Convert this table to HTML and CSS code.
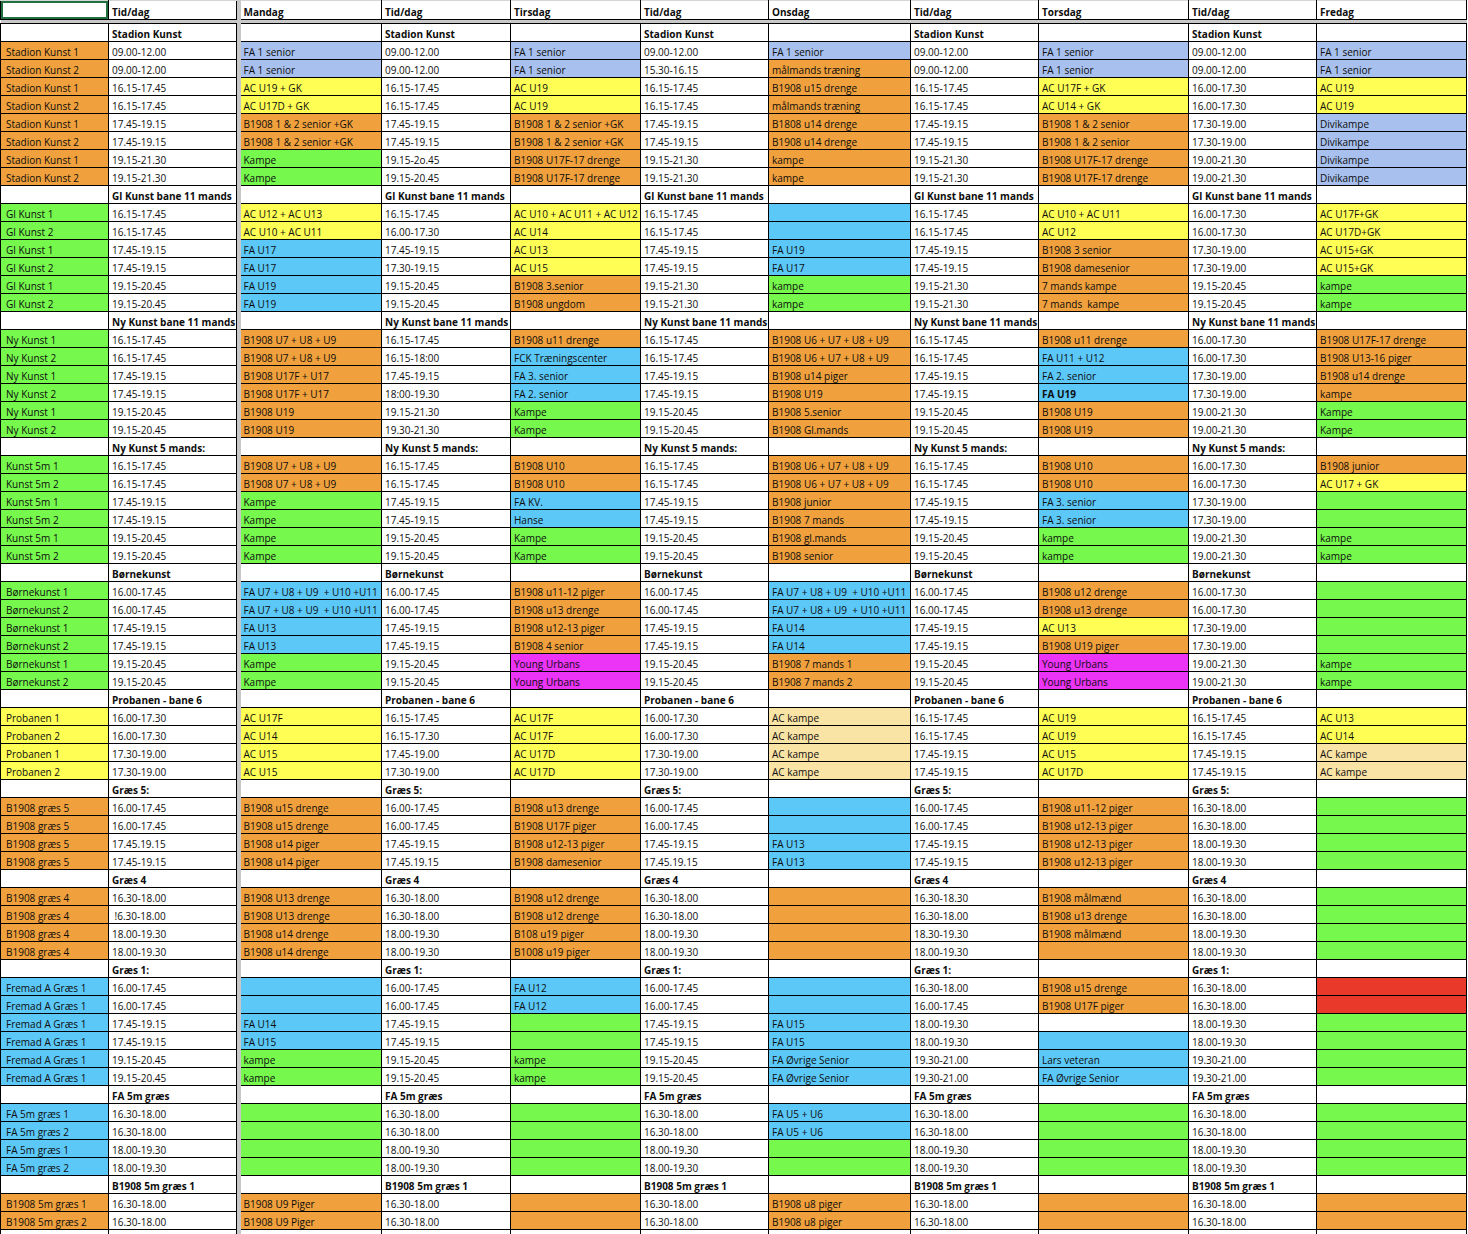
FILE: index.html
```html
<!DOCTYPE html>
<html lang="da">
<head>
<meta charset="utf-8">
<title>Baneplan</title>
<link rel="stylesheet" href="styles.css">
</head>
<body>
<table class="sheet">
<colgroup>
<col class="ca"><col class="cb"><col class="cc"><col class="cd"><col class="ce"><col class="cf"><col class="cg"><col class="ch"><col class="ci"><col class="cj"><col class="ck">
</colgroup>
<tbody>
<tr class="hd"><td class="sel"></td><td>Tid/dag</td><td>Mandag</td><td>Tid/dag</td><td>Tirsdag</td><td>Tid/dag</td><td>Onsdag</td><td>Tid/dag</td><td>Torsdag</td><td>Tid/dag</td><td>Fredag</td></tr>
<tr class="gap"><td colspan="11"></td></tr>

<tr class="s"><td></td><td>Stadion Kunst</td><td></td><td>Stadion Kunst</td><td></td><td>Stadion Kunst</td><td></td><td>Stadion Kunst</td><td></td><td>Stadion Kunst</td><td></td></tr>
<tr><td class="o">Stadion Kunst 1</td><td>09.00-12.00</td><td class="l">FA 1 senior</td><td>09.00-12.00</td><td class="l">FA 1 senior</td><td>09.00-12.00</td><td class="l">FA 1 senior</td><td>09.00-12.00</td><td class="l">FA 1 senior</td><td>09.00-12.00</td><td class="l">FA 1 senior</td></tr>
<tr><td class="o">Stadion Kunst 2</td><td>09.00-12.00</td><td class="l">FA 1 senior</td><td>09.00-12.00</td><td class="l">FA 1 senior</td><td>15.30-16.15</td><td class="o">målmands træning</td><td>09.00-12.00</td><td class="l">FA 1 senior</td><td>09.00-12.00</td><td class="l">FA 1 senior</td></tr>
<tr><td class="o">Stadion Kunst 1</td><td>16.15-17.45</td><td class="y">AC U19 + GK</td><td>16.15-17.45</td><td class="y">AC U19</td><td>16.15-17.45</td><td class="o">B1908 u15 drenge</td><td>16.15-17.45</td><td class="y">AC U17F + GK</td><td>16.00-17.30</td><td class="y">AC U19</td></tr>
<tr><td class="o">Stadion Kunst 2</td><td>16.15-17.45</td><td class="y">AC U17D + GK</td><td>16.15-17.45</td><td class="y">AC U19</td><td>16.15-17.45</td><td class="o">målmands træning</td><td>16.15-17.45</td><td class="y">AC U14 + GK</td><td>16.00-17.30</td><td class="y">AC U19</td></tr>
<tr><td class="o">Stadion Kunst 1</td><td>17.45-19.15</td><td class="o">B1908 1 &amp; 2 senior +GK</td><td>17.45-19.15</td><td class="o">B1908 1 &amp; 2 senior +GK</td><td>17.45-19.15</td><td class="o">B1808 u14 drenge</td><td>17.45-19.15</td><td class="o">B1908 1 &amp; 2 senior</td><td>17.30-19.00</td><td class="l">Divikampe</td></tr>
<tr><td class="o">Stadion Kunst 2</td><td>17.45-19.15</td><td class="o">B1908 1 &amp; 2 senior +GK</td><td>17.45-19.15</td><td class="o">B1908 1 &amp; 2 senior +GK</td><td>17.45-19.15</td><td class="o">B1908 u14 drenge</td><td>17.45-19.15</td><td class="o">B1908 1 &amp; 2 senior</td><td>17.30-19.00</td><td class="l">Divikampe</td></tr>
<tr><td class="o">Stadion Kunst 1</td><td>19.15-21.30</td><td class="g">Kampe</td><td>19.15-2o.45</td><td class="o">B1908 U17F-17 drenge</td><td>19.15-21.30</td><td class="o">kampe</td><td>19.15-21.30</td><td class="o">B1908 U17F-17 drenge</td><td>19.00-21.30</td><td class="l">Divikampe</td></tr>
<tr><td class="o">Stadion Kunst 2</td><td>19.15-21.30</td><td class="g">Kampe</td><td>19.15-20.45</td><td class="o">B1908 U17F-17 drenge</td><td>19.15-21.30</td><td class="o">kampe</td><td>19.15-21.30</td><td class="o">B1908 U17F-17 drenge</td><td>19.00-21.30</td><td class="l">Divikampe</td></tr>

<tr class="s"><td></td><td>Gl Kunst bane 11 mands</td><td></td><td>Gl Kunst bane 11 mands</td><td></td><td>Gl Kunst bane 11 mands</td><td></td><td>Gl Kunst bane 11 mands</td><td></td><td>Gl Kunst bane 11 mands</td><td></td></tr>
<tr><td class="g">Gl Kunst 1</td><td>16.15-17.45</td><td class="y">AC U12 + AC U13</td><td>16.15-17.45</td><td class="y">AC U10 + AC U11 + AC U12</td><td>16.15-17.45</td><td class="c"></td><td>16.15-17.45</td><td class="y">AC U10 + AC U11</td><td>16.00-17.30</td><td class="y">AC U17F+GK</td></tr>
<tr><td class="g">Gl Kunst 2</td><td>16.15-17.45</td><td class="y">AC U10 + AC U11</td><td>16.00-17.30</td><td class="y">AC U14</td><td>16.15-17.45</td><td class="c"></td><td>16.15-17.45</td><td class="y">AC U12</td><td>16.00-17.30</td><td class="y">AC U17D+GK</td></tr>
<tr><td class="g">Gl Kunst 1</td><td>17.45-19.15</td><td class="c">FA U17</td><td>17.45-19.15</td><td class="y">AC U13</td><td>17.45-19.15</td><td class="c">FA U19</td><td>17.45-19.15</td><td class="o">B1908 3 senior</td><td>17.30-19.00</td><td class="y">AC U15+GK</td></tr>
<tr><td class="g">Gl Kunst 2</td><td>17.45-19.15</td><td class="c">FA U17</td><td>17.30-19.15</td><td class="y">AC U15</td><td>17.45-19.15</td><td class="c">FA U17</td><td>17.45-19.15</td><td class="o">B1908 damesenior</td><td>17.30-19.00</td><td class="y">AC U15+GK</td></tr>
<tr><td class="g">Gl Kunst 1</td><td>19.15-20.45</td><td class="c">FA U19</td><td>19.15-20.45</td><td class="o">B1908 3.senior</td><td>19.15-21.30</td><td class="g">kampe</td><td>19.15-21.30</td><td class="o">7 mands kampe</td><td>19.15-20.45</td><td class="g">kampe</td></tr>
<tr><td class="g">Gl Kunst 2</td><td>19.15-20.45</td><td class="c">FA U19</td><td>19.15-20.45</td><td class="o">B1908 ungdom</td><td>19.15-21.30</td><td class="g">kampe</td><td>19.15-21.30</td><td class="o">7 mands &nbsp;kampe</td><td>19.15-20.45</td><td class="g">kampe</td></tr>

<tr class="s"><td></td><td>Ny Kunst bane 11 mands</td><td></td><td>Ny Kunst bane 11 mands</td><td></td><td>Ny Kunst bane 11 mands</td><td></td><td>Ny Kunst bane 11 mands</td><td></td><td>Ny Kunst bane 11 mands</td><td></td></tr>
<tr><td class="g">Ny Kunst 1</td><td>16.15-17.45</td><td class="o">B1908 U7 + U8 + U9</td><td>16.15-17.45</td><td class="o">B1908 u11 drenge</td><td>16.15-17.45</td><td class="o">B1908 U6 + U7 + U8 + U9</td><td>16.15-17.45</td><td class="o">B1908 u11 drenge</td><td>16.00-17.30</td><td class="o">B1908 U17F-17 drenge</td></tr>
<tr><td class="g">Ny Kunst 2</td><td>16.15-17.45</td><td class="o">B1908 U7 + U8 + U9</td><td>16.15-18:00</td><td class="c">FCK Træningscenter</td><td>16.15-17.45</td><td class="o">B1908 U6 + U7 + U8 + U9</td><td>16.15-17.45</td><td class="c">FA U11 + U12</td><td>16.00-17.30</td><td class="o">B1908 U13-16 piger</td></tr>
<tr><td class="g">Ny Kunst 1</td><td>17.45-19.15</td><td class="o">B1908 U17F + U17</td><td>17.45-19.15</td><td class="c">FA 3. senior</td><td>17.45-19.15</td><td class="o">B1908 u14 piger</td><td>17.45-19.15</td><td class="c">FA 2. senior</td><td>17.30-19.00</td><td class="o">B1908 u14 drenge</td></tr>
<tr><td class="g">Ny Kunst 2</td><td>17.45-19.15</td><td class="o">B1908 U17F + U17</td><td>18:00-19.30</td><td class="c">FA 2. senior</td><td>17.45-19.15</td><td class="o">B1908 U19</td><td>17.45-19.15</td><td class="c b">FA U19</td><td>17.30-19.00</td><td class="o">kampe</td></tr>
<tr><td class="g">Ny Kunst 1</td><td>19.15-20.45</td><td class="o">B1908 U19</td><td>19.15-21.30</td><td class="g">Kampe</td><td>19.15-20.45</td><td class="o">B1908 5.senior</td><td>19.15-20.45</td><td class="o">B1908 U19</td><td>19.00-21.30</td><td class="g">Kampe</td></tr>
<tr><td class="g">Ny Kunst 2</td><td>19.15-20.45</td><td class="o">B1908 U19</td><td>19.30-21.30</td><td class="g">Kampe</td><td>19.15-20.45</td><td class="o">B1908 Gl.mands</td><td>19.15-20.45</td><td class="o">B1908 U19</td><td>19.00-21.30</td><td class="g">Kampe</td></tr>

<tr class="s"><td></td><td>Ny Kunst 5 mands:</td><td></td><td>Ny Kunst 5 mands:</td><td></td><td>Ny Kunst 5 mands:</td><td></td><td>Ny Kunst 5 mands:</td><td></td><td>Ny Kunst 5 mands:</td><td></td></tr>
<tr><td class="g">Kunst 5m 1</td><td>16.15-17.45</td><td class="o">B1908 U7 + U8 + U9</td><td>16.15-17.45</td><td class="o">B1908 U10</td><td>16.15-17.45</td><td class="o">B1908 U6 + U7 + U8 + U9</td><td>16.15-17.45</td><td class="o">B1908 U10</td><td>16.00-17.30</td><td class="o">B1908 junior</td></tr>
<tr><td class="g">Kunst 5m 2</td><td>16.15-17.45</td><td class="o">B1908 U7 + U8 + U9</td><td>16.15-17.45</td><td class="o">B1908 U10</td><td>16.15-17.45</td><td class="o">B1908 U6 + U7 + U8 + U9</td><td>16.15-17.45</td><td class="o">B1908 U10</td><td>16.00-17.30</td><td class="y">AC U17 + GK</td></tr>
<tr><td class="g">Kunst 5m 1</td><td>17.45-19.15</td><td class="g">Kampe</td><td>17.45-19.15</td><td class="c">FA KV.</td><td>17.45-19.15</td><td class="o">B1908 junior</td><td>17.45-19.15</td><td class="c">FA 3. senior</td><td>17.30-19.00</td><td class="g"></td></tr>
<tr><td class="g">Kunst 5m 2</td><td>17.45-19.15</td><td class="g">Kampe</td><td>17.45-19.15</td><td class="c">Hanse</td><td>17.45-19.15</td><td class="o">B1908 7 mands</td><td>17.45-19.15</td><td class="c">FA 3. senior</td><td>17.30-19.00</td><td class="g"></td></tr>
<tr><td class="g">Kunst 5m 1</td><td>19.15-20.45</td><td class="g">Kampe</td><td>19.15-20.45</td><td class="g">Kampe</td><td>19.15-20.45</td><td class="o">B1908 gl.mands</td><td>19.15-20.45</td><td class="g">kampe</td><td>19.00-21.30</td><td class="g">kampe</td></tr>
<tr><td class="g">Kunst 5m 2</td><td>19.15-20.45</td><td class="g">Kampe</td><td>19.15-20.45</td><td class="g">Kampe</td><td>19.15-20.45</td><td class="o">B1908 senior</td><td>19.15-20.45</td><td class="g">kampe</td><td>19.00-21.30</td><td class="g">kampe</td></tr>

<tr class="s"><td></td><td>Børnekunst</td><td></td><td>Børnekunst</td><td></td><td>Børnekunst</td><td></td><td>Børnekunst</td><td></td><td>Børnekunst</td><td></td></tr>
<tr><td class="g">Børnekunst 1</td><td>16.00-17.45</td><td class="c">FA U7 + U8 + U9 &nbsp;+ U10 +U11</td><td>16.00-17.45</td><td class="o">B1908 u11-12 piger</td><td>16.00-17.45</td><td class="c">FA U7 + U8 + U9 &nbsp;+ U10 +U11</td><td>16.00-17.45</td><td class="o">B1908 u12 drenge</td><td>16.00-17.30</td><td class="g"></td></tr>
<tr><td class="g">Børnekunst 2</td><td>16.00-17.45</td><td class="c">FA U7 + U8 + U9 &nbsp;+ U10 +U11</td><td>16.00-17.45</td><td class="o">B1908 u13 drenge</td><td>16.00-17.45</td><td class="c">FA U7 + U8 + U9 &nbsp;+ U10 +U11</td><td>16.00-17.45</td><td class="o">B1908 u13 drenge</td><td>16.00-17.30</td><td class="g"></td></tr>
<tr><td class="g">Børnekunst 1</td><td>17.45-19.15</td><td class="c">FA U13</td><td>17.45-19.15</td><td class="o">B1908 u12-13 piger</td><td>17.45-19.15</td><td class="c">FA U14</td><td>17.45-19.15</td><td class="y">AC U13</td><td>17.30-19.00</td><td class="g"></td></tr>
<tr><td class="g">Børnekunst 2</td><td>17.45-19.15</td><td class="c">FA U13</td><td>17.45-19.15</td><td class="o">B1908 4 senior</td><td>17.45-19.15</td><td class="c">FA U14</td><td>17.45-19.15</td><td class="o">B1908 U19 piger</td><td>17.30-19.00</td><td class="g"></td></tr>
<tr><td class="g">Børnekunst 1</td><td>19.15-20.45</td><td class="g">Kampe</td><td>19.15-20.45</td><td class="m">Young Urbans</td><td>19.15-20.45</td><td class="o">B1908 7 mands 1</td><td>19.15-20.45</td><td class="m">Young Urbans</td><td>19.00-21.30</td><td class="g">kampe</td></tr>
<tr><td class="g">Børnekunst 2</td><td>19.15-20.45</td><td class="g">Kampe</td><td>19.15-20.45</td><td class="m">Young Urbans</td><td>19.15-20.45</td><td class="o">B1908 7 mands 2</td><td>19.15-20.45</td><td class="m">Young Urbans</td><td>19.00-21.30</td><td class="g">kampe</td></tr>

<tr class="s"><td></td><td>Probanen - bane 6</td><td></td><td>Probanen - bane 6</td><td></td><td>Probanen - bane 6</td><td></td><td>Probanen - bane 6</td><td></td><td>Probanen - bane 6</td><td></td></tr>
<tr><td class="y">Probanen 1</td><td>16.00-17.30</td><td class="y">AC U17F</td><td>16.15-17.45</td><td class="y">AC U17F</td><td>16.00-17.30</td><td class="t">AC kampe</td><td>16.15-17.45</td><td class="y">AC U19</td><td>16.15-17.45</td><td class="y">AC U13</td></tr>
<tr><td class="y">Probanen 2</td><td>16.00-17.30</td><td class="y">AC U14</td><td>16.15-17.30</td><td class="y">AC U17F</td><td>16.00-17.30</td><td class="t">AC kampe</td><td>16.15-17.45</td><td class="y">AC U19</td><td>16.15-17.45</td><td class="y">AC U14</td></tr>
<tr><td class="y">Probanen 1</td><td>17.30-19.00</td><td class="y">AC U15</td><td>17.45-19.00</td><td class="y">AC U17D</td><td>17.30-19.00</td><td class="t">AC kampe</td><td>17.45-19.15</td><td class="y">AC U15</td><td>17.45-19.15</td><td class="t">AC kampe</td></tr>
<tr><td class="y">Probanen 2</td><td>17.30-19.00</td><td class="y">AC U15</td><td>17.30-19.00</td><td class="y">AC U17D</td><td>17.30-19.00</td><td class="t">AC kampe</td><td>17.45-19.15</td><td class="y">AC U17D</td><td>17.45-19.15</td><td class="t">AC kampe</td></tr>

<tr class="s"><td></td><td>Græs 5:</td><td></td><td>Græs 5:</td><td></td><td>Græs 5:</td><td></td><td>Græs 5:</td><td></td><td>Græs 5:</td><td></td></tr>
<tr><td class="o">B1908 græs 5</td><td>16.00-17.45</td><td class="o">B1908 u15 drenge</td><td>16.00-17.45</td><td class="o">B1908 u13 drenge</td><td>16.00-17.45</td><td class="c"></td><td>16.00-17.45</td><td class="o">B1908 u11-12 piger</td><td>16.30-18.00</td><td class="g"></td></tr>
<tr><td class="o">B1908 græs 5</td><td>16.00-17.45</td><td class="o">B1908 u15 drenge</td><td>16.00-17.45</td><td class="o">B1908 U17F piger</td><td>16.00-17.45</td><td class="c"></td><td>16.00-17.45</td><td class="o">B1908 u12-13 piger</td><td>16.30-18.00</td><td class="g"></td></tr>
<tr><td class="o">B1908 græs 5</td><td>17.45.19.15</td><td class="o">B1908 u14 piger</td><td>17.45-19.15</td><td class="o">B1908 u12-13 piger</td><td>17.45-19.15</td><td class="c">FA U13</td><td>17.45-19.15</td><td class="o">B1908 u12-13 piger</td><td>18.00-19.30</td><td class="g"></td></tr>
<tr><td class="o">B1908 græs 5</td><td>17.45-19.15</td><td class="o">B1908 u14 piger</td><td>17.45.19.15</td><td class="o">B1908 damesenior</td><td>17.45.19.15</td><td class="c">FA U13</td><td>17.45-19.15</td><td class="o">B1908 u12-13 piger</td><td>18.00-19.30</td><td class="g"></td></tr>

<tr class="s"><td></td><td>Græs 4</td><td></td><td>Græs 4</td><td></td><td>Græs 4</td><td></td><td>Græs 4</td><td></td><td>Græs 4</td><td></td></tr>
<tr><td class="o">B1908 græs 4</td><td>16.30-18.00</td><td class="o">B1908 U13 drenge</td><td>16.30-18.00</td><td class="o">B1908 u12 drenge</td><td>16.30-18.00</td><td class="o"></td><td>16.30-18.30</td><td class="o">B1908 målmænd</td><td>16.30-18.00</td><td class="g"></td></tr>
<tr><td class="o">B1908 græs 4</td><td>&nbsp;!6.30-18.00</td><td class="o">B1908 U13 drenge</td><td>16.30-18.00</td><td class="o">B1908 u12 drenge</td><td>16.30-18.00</td><td class="o"></td><td>16.30-18.00</td><td class="o">B1908 u13 drenge</td><td>16.30-18.00</td><td class="g"></td></tr>
<tr><td class="o">B1908 græs 4</td><td>18.00-19.30</td><td class="o">B1908 u14 drenge</td><td>18.00-19.30</td><td class="o">B108 u19 piger</td><td>18.00-19.30</td><td class="o"></td><td>18.30-19.30</td><td class="o">B1908 målmænd</td><td>18.00-19.30</td><td class="g"></td></tr>
<tr><td class="o">B1908 græs 4</td><td>18.00-19.30</td><td class="o">B1908 u14 drenge</td><td>18.00-19.30</td><td class="o">B1008 u19 piger</td><td>18.00-19.30</td><td class="o"></td><td>18.00-19.30</td><td class="o"></td><td>18.00-19.30</td><td class="g"></td></tr>

<tr class="s"><td></td><td>Græs 1:</td><td></td><td>Græs 1:</td><td></td><td>Græs 1:</td><td></td><td>Græs 1:</td><td></td><td>Græs 1:</td><td></td></tr>
<tr><td class="c">Fremad A Græs 1</td><td>16.00-17.45</td><td class="c"></td><td>16.00-17.45</td><td class="c">FA U12</td><td>16.00-17.45</td><td class="c"></td><td>16.30-18.00</td><td class="o">B1908 u15 drenge</td><td>16.30-18.00</td><td class="r"></td></tr>
<tr><td class="c">Fremad A Græs 1</td><td>16.00-17.45</td><td class="c"></td><td>16.00-17.45</td><td class="c">FA U12</td><td>16.00-17.45</td><td class="c"></td><td>16.00-17.45</td><td class="o">B1908 U17F piger</td><td>16.30-18.00</td><td class="r"></td></tr>
<tr><td class="c">Fremad A Græs 1</td><td>17.45-19.15</td><td class="c">FA U14</td><td>17.45-19.15</td><td class="g"></td><td>17.45-19.15</td><td class="c">FA U15</td><td>18.00-19.30</td><td></td><td>18.00-19.30</td><td class="g"></td></tr>
<tr><td class="c">Fremad A Græs 1</td><td>17.45-19.15</td><td class="c">FA U15</td><td>17.45-19.15</td><td class="g"></td><td>17.45-19.15</td><td class="c">FA U15</td><td>18.00-19.30</td><td class="c"></td><td>18.00-19.30</td><td class="g"></td></tr>
<tr><td class="c">Fremad A Græs 1</td><td>19.15-20.45</td><td class="g">kampe</td><td>19.15-20.45</td><td class="g">kampe</td><td>19.15-20.45</td><td class="c">FA Øvrige Senior</td><td>19.30-21.00</td><td class="c">Lars veteran</td><td>19.30-21.00</td><td class="g"></td></tr>
<tr><td class="c">Fremad A Græs 1</td><td>19.15-20.45</td><td class="g">kampe</td><td>19.15-20.45</td><td class="g">kampe</td><td>19.15-20.45</td><td class="c">FA Øvrige Senior</td><td>19.30-21.00</td><td class="c">FA Øvrige Senior</td><td>19.30-21.00</td><td class="g"></td></tr>

<tr class="s"><td></td><td>FA 5m græs</td><td></td><td>FA 5m græs</td><td></td><td>FA 5m græs</td><td></td><td>FA 5m græs</td><td></td><td>FA 5m græs</td><td></td></tr>
<tr><td class="c">FA 5m græs 1</td><td>16.30-18.00</td><td class="g"></td><td>16.30-18.00</td><td class="g"></td><td>16.30-18.00</td><td class="c">FA U5 + U6</td><td>16.30-18.00</td><td class="g"></td><td>16.30-18.00</td><td class="g"></td></tr>
<tr><td class="c">FA 5m græs 2</td><td>16.30-18.00</td><td class="g"></td><td>16.30-18.00</td><td class="g"></td><td>16.30-18.00</td><td class="c">FA U5 + U6</td><td>16.30-18.00</td><td class="g"></td><td>16.30-18.00</td><td class="g"></td></tr>
<tr><td class="c">FA 5m græs 1</td><td>18.00-19.30</td><td class="g"></td><td>18.00-19.30</td><td class="g"></td><td>18.00-19.30</td><td class="g"></td><td>18.00-19.30</td><td class="g"></td><td>18.00-19.30</td><td class="g"></td></tr>
<tr><td class="c">FA 5m græs 2</td><td>18.00-19.30</td><td class="g"></td><td>18.00-19.30</td><td class="g"></td><td>18.00-19.30</td><td class="g"></td><td>18.00-19.30</td><td class="g"></td><td>18.00-19.30</td><td class="g"></td></tr>

<tr class="s"><td></td><td>B1908 5m græs 1</td><td></td><td>B1908 5m græs 1</td><td></td><td>B1908 5m græs 1</td><td></td><td>B1908 5m græs 1</td><td></td><td>B1908 5m græs 1</td><td></td></tr>
<tr><td class="o">B1908 5m græs 1</td><td>16.30-18.00</td><td class="o">B1908 U9 Piger</td><td>16.30-18.00</td><td class="o"></td><td>16.30-18.00</td><td class="o">B1908 u8 piger</td><td>16.30-18.00</td><td class="o"></td><td>16.30-18.00</td><td class="o"></td></tr>
<tr><td class="o">B1908 5m græs 2</td><td>16.30-18.00</td><td class="o">B1908 U9 Piger</td><td>16.30-18.00</td><td class="o"></td><td>16.30-18.00</td><td class="o">B1908 u8 piger</td><td>16.30-18.00</td><td class="o"></td><td>16.30-18.00</td><td class="o"></td></tr>
<tr><td></td><td></td><td></td><td></td><td></td><td></td><td></td><td></td><td></td><td></td><td></td></tr>
</tbody>
</table>
</body>
</html>
```
FILE: styles.css
```css
html, body {
  margin: 0;
  padding: 0;
  background: #ffffff;
}

body {
  font-family: "Open Sans", "Liberation Sans", sans-serif;
  font-size: 10px;
  color: #0d0d0d;
  overflow: hidden;
}

.sheet {
  border-collapse: collapse;
  table-layout: fixed;
  width: 1466px;
}

.ca { width: 108px; }
.cb { width: 130px; }
.cc { width: 143px; }
.cd { width: 129px; }
.ce { width: 130px; }
.cf { width: 128px; }
.cg { width: 142px; }
.ch { width: 128px; }
.ci { width: 150px; }
.cj { width: 128px; }
.ck { width: 150px; }

.sheet td {
  border: 1px solid #000;
  height: 16px;
  padding: 0 3px 1px 3px;
  line-height: 12px;
  vertical-align: bottom;
  white-space: nowrap;
  overflow: hidden;
  background: #fff;
}

.sheet td:nth-child(2) {
  border-right: 4px solid #c8c8c8;
  box-shadow: inset -1px 0 0 #000;
}

.sheet td:first-child {
  padding-left: 5px;
}

.hd td {
  font-weight: 700;
  height: 17px;
  border-top: 1px solid #d4d4d4;
}

.hd td.sel {
  box-shadow: inset 0 0 0 2px #23703f;
}

.gap td {
  height: 3px;
  padding: 0;
  background: #c8c8c8;
  border-left: 0;
  border-right: 0;
  box-shadow: none;
}

.s td:nth-child(even) {
  font-weight: 700;
}

.b { font-weight: 700; }

.sheet td.o { background: #f0a03c; }
.sheet td.l { background: #a8c0ee; }
.sheet td.y { background: #fefe55; }
.sheet td.g { background: #76f84d; }
.sheet td.c { background: #5cc8f8; }
.sheet td.m { background: #eb34f5; }
.sheet td.t { background: #f9e3a5; }
.sheet td.r { background: #e8392a; }
```
